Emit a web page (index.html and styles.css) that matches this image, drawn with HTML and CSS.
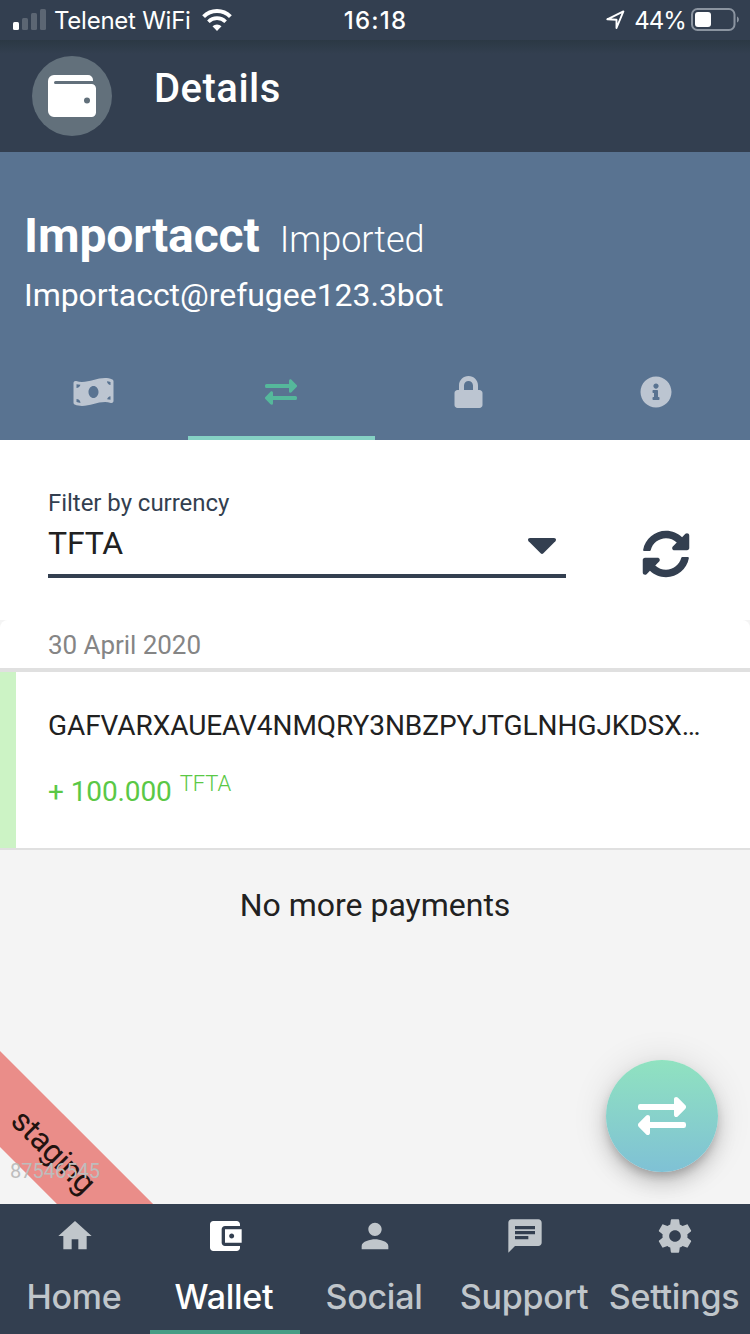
FILE: index.html
```html
<!DOCTYPE html>
<html lang="en">
<head>
<meta charset="utf-8">
<title>Wallet details</title>
<link rel="stylesheet" href="styles.css">
</head>
<body>
<svg class="defs" width="0" height="0">
  <symbol id="exchange" viewBox="0 0 32 32">
    <path d="M1.5 8H24V4.8c0-1.5 1.6-2 2.5-1.1l5.1 5.2c.6.6.6 1.6 0 2.2l-5.1 5.2c-.9.9-2.5.4-2.5-1.1V12H1.500A1.500 1.500 0 0 1 0 10.500v-1A1.500 1.500 0 0 1 1.500 8z"/>
    <path d="M30.500 24H8v3.200c0 1.500-1.600 2-2.500 1.100l-5.100-5.200c-.6-.6-.6-1.600 0-2.200l5.100-5.200c.9-.9 2.500-.4 2.500 1.100V20h22.500a1.500 1.500 0 0 1 1.500 1.500v1a1.500 1.500 0 0 1-1.500 1.500z"/>
  </symbol>
</svg>
<div class="screen">
  <div class="status">
    <div class="status-left">
      <svg class="signal" viewBox="0 0 34 22"><rect x="0" y="13" width="6" height="8" rx="1.500"/><g opacity=".2"><rect x="9" y="9" width="6" height="12" rx="1.500"/><rect x="18" y="4" width="6" height="17" rx="1.500"/><rect x="27" y="0" width="6" height="21" rx="1.500"/></g></svg>
      <span class="carrier">Telenet WiFi</span>
      <svg class="wifi" viewBox="0 0 30 22" fill="none" stroke="#fff"><path d="M1.600 7.600a19 19 0 0 1 26.800 0" stroke-width="4" fill="none"/><path d="M6.400 12.700a12.200 12.200 0 0 1 17.200 0" stroke-width="3.600" fill="none"/><path d="M15 22l-4.500-4.700a6.500 6.500 0 0 1 9 0z" fill="#fff" stroke="none"/></svg>
    </div>
    <span class="clock">16:18</span>
    <div class="status-right">
      <svg class="locate" viewBox="0 0 20 20"><path d="M1.300 9.300 17.400 1.400 10.500 18V9.800z" fill="none" stroke="#fff" stroke-width="1.900" stroke-linejoin="round"/></svg>
      <span class="percent">44%</span>
      <svg class="battery" viewBox="0 0 50 24"><rect x="1" y="1" width="42.500" height="21" rx="5.500" fill="none" stroke="#8b94a0" stroke-width="2"/><rect x="4" y="4" width="16" height="15" rx="3"/><path d="M46 8.500c2.500 1 2.500 5 0 6z" fill="#8b94a0"/></svg>
    </div>
  </div>

  <header class="header">
    <div class="avatar">
      <svg viewBox="0 0 48 42"><path fill-rule="evenodd" d="M6 0h34a5 5 0 0 1 5 5v1H7.500a1.500 1.500 0 0 0 0 3H43.500A4.500 4.500 0 0 1 48 13.500v24A4.500 4.500 0 0 1 43.500 42H6a6 6 0 0 1-6-6V6a6 6 0 0 1 6-6zM39 22.500a3 3 0 1 0 0 6 3 3 0 0 0 0-6z"/></svg>
    </div>
    <h1 class="title">Details</h1>
  </header>

  <section class="hero">
    <div class="account"><h2 class="name">Importacct</h2><span class="tag">Imported</span></div>
    <div class="address">Importacct@refugee123.3bot</div>
    <nav class="tabs">
      <div class="tab"><svg class="i-money" viewBox="0 0 640 512"><path d="M621.160 54.460C582.370 38.190 543.550 32 504.750 32c-123.170-.01-246.330 62.340-369.500 62.340-30.890 0-61.760-3.920-92.650-13.720-3.470-1.100-6.950-1.620-10.350-1.620C15.040 79 0 92.320 0 110.810v317.260c0 12.630 7.230 24.600 18.840 29.460C57.630 473.810 96.450 480 135.250 480c123.170 0 246.340-62.350 369.510-62.350 30.890 0 61.760 3.920 92.650 13.720 3.470 1.100 6.950 1.620 10.350 1.620 17.210 0 32.250-13.320 32.250-31.810V83.930c-.01-12.640-7.240-24.600-18.850-29.470zM48 132.220c20.120 5.040 41.120 7.570 62.720 8.930C104.840 170.540 79 192.690 48 192.690v-60.470zm0 285v-47.780c34.370 0 62.180 27.270 63.710 61.400-22.530-1.810-43.590-6.310-63.710-13.620zM320 352c-44.190 0-80-42.990-80-96 0-53.020 35.820-96 80-96s80 42.980 80 96c0 53.030-35.830 96-80 96zm272 27.780c-17.520-4.390-35.710-6.850-54.320-8.440 5.870-26.080 27.500-45.880 54.320-49.280v57.720zm0-236.110c-30.890-3.910-54.860-29.700-55.810-61.550 19.540 2.170 38.090 6.230 55.810 12.660v48.890z"/></svg></div>
      <div class="tab active"><svg class="i-32"><use href="#exchange"/></svg></div>
      <div class="tab"><svg class="i-lock" viewBox="0 0 448 512"><path d="M400 224h-24v-72C376 68.200 307.800 0 224 0S72 68.200 72 152v72H48c-26.500 0-48 21.500-48 48v192c0 26.500 21.500 48 48 48h352c26.500 0 48-21.500 48-48V272c0-26.500-21.500-48-48-48zm-104 0H152v-72c0-39.700 32.300-72 72-72s72 32.300 72 72v72z"/></svg></div>
      <div class="tab"><svg class="i-32" viewBox="0 0 512 512"><path d="M256 8C119.043 8 8 119.083 8 256c0 136.997 111.043 248 248 248s248-111.003 248-248C504 119.083 392.957 8 256 8zm0 110c23.196 0 42 18.804 42 42s-18.804 42-42 42-42-18.804-42-42 18.804-42 42-42zm56 254c0 6.627-5.373 12-12 12h-88c-6.627 0-12-5.373-12-12v-24c0-6.627 5.373-12 12-12h12v-64h-12c-6.627 0-12-5.373-12-12v-24c0-6.627 5.373-12 12-12h64c6.627 0 12 5.373 12 12v100h12c6.627 0 12 5.373 12 12v24z"/></svg></div>
    </nav>
  </section>

  <section class="filter">
    <div class="select">
      <label class="label">Filter by currency</label>
      <div class="value"><span>TFTA</span><svg class="caret" viewBox="0 0 28 16"><path d="M2 0h24c1.900 0 2.600 1.900 1.400 3.200L15.400 15.200a2 2 0 0 1-2.800 0L.6 3.200C-.6 1.900.1 0 2 0z"/></svg></div>
    </div>
    <svg class="sync" viewBox="0 0 512 512"><path d="M370.720 133.280C339.458 104.008 298.888 87.962 255.848 88c-77.458.068-144.328 53.178-162.791 126.850-1.344 5.363-6.122 9.150-11.651 9.150H24.103c-7.498 0-13.194-6.807-11.807-14.176C33.933 94.924 134.813 8 256 8c66.448 0 126.791 26.136 171.315 68.685L463.030 40.970C478.149 25.851 504 36.559 504 57.941V192c0 13.255-10.745 24-24 24H345.941c-21.382 0-32.090-25.851-16.971-40.971l41.750-41.749zM32 296h134.059c21.382 0 32.090 25.851 16.971 40.971l-41.750 41.750c31.262 29.273 71.835 45.319 114.876 45.280 77.418-.07 144.315-53.144 162.787-126.849 1.344-5.363 6.122-9.150 11.651-9.150h57.304c7.498 0 13.194 6.807 11.807 14.176C478.067 417.076 377.187 504 256 504c-66.448 0-126.791-26.136-171.315-68.685L48.970 471.030C33.851 486.149 8 475.441 8 454.059V320c0-13.255 10.745-24 24-24z"/></svg>
  </section>

  <main class="content">
    <div class="date">30 April 2020</div>
    <article class="payment">
      <div class="payee">GAFVARXAUEAV4NMQRY3NBZPYJTGLNHGJKDSX…</div>
      <div class="amount"><span>+ 100.000</span><span class="unit">TFTA</span></div>
    </article>
    <p class="end">No more payments</p>
    <div class="ribbon">staging</div>
    <span class="build">87546545</span>
    <button class="fab" aria-label="Transfer"><svg><use href="#exchange"/></svg></button>
  </main>

  <nav class="bottom">
    <div class="item"><svg viewBox="0 0 24 24"><path d="M10 20v-6h4v6h5v-8h3L12 3 2 12h3v8z"/></svg><span>Home</span></div>
    <div class="item current"><svg viewBox="0 0 24 24"><path d="M21 18v1c0 1.100-.9 2-2 2H5c-1.110 0-2-.9-2-2V5c0-1.100.89-2 2-2h14c1.100 0 2 .9 2 2v1h-9c-1.110 0-2 .9-2 2v8c0 1.100.89 2 2 2h9zm-9-2h10V8H12v8zm4-2.500c-.83 0-1.500-.67-1.500-1.500s.67-1.500 1.500-1.500 1.500.67 1.500 1.500-.67 1.500-1.500 1.500z"/></svg><span>Wallet</span></div>
    <div class="item"><svg viewBox="0 0 24 24"><path d="M12 12c2.210 0 4-1.790 4-4s-1.790-4-4-4-4 1.790-4 4 1.790 4 4 4zm0 2c-2.670 0-8 1.340-8 4v2h16v-2c0-2.660-5.330-4-8-4z"/></svg><span>Social</span></div>
    <div class="item"><svg viewBox="0 0 24 24"><path d="M20 2H4c-1.100 0-1.990.9-1.990 2L2 22l4-4h14c1.100 0 2-.9 2-2V4c0-1.100-.9-2-2-2zM6 9h12v2H6V9zm8 5H6v-2h8v2zm4-6H6V6h12v2z"/></svg><span>Support</span></div>
    <div class="item"><svg viewBox="0 0 24 24"><path d="M19.430 12.980c.04-.32.07-.64.07-.98s-.03-.66-.07-.98l2.110-1.650c.19-.15.24-.42.12-.64l-2-3.460c-.12-.22-.39-.3-.61-.22l-2.490 1c-.52-.4-1.080-.73-1.690-.98l-.38-2.650C14.460 2.180 14.250 2 14 2h-4c-.25 0-.46.18-.49.42l-.38 2.650c-.61.25-1.170.59-1.690.98l-2.490-1c-.23-.09-.49 0-.61.22l-2 3.460c-.13.22-.07.49.12.64l2.110 1.650c-.04.32-.07.65-.07.98s.03.66.07.98l-2.110 1.650c-.19.15-.24.42-.12.64l2 3.460c.12.22.39.3.61.22l2.490-1c.52.4 1.080.73 1.690.98l.38 2.650c.03.24.24.42.49.42h4c.25 0 .46-.18.49-.42l.38-2.650c.61-.25 1.170-.59 1.690-.98l2.490 1c.23.09.49 0 .61-.22l2-3.460c.12-.22.07-.49-.12-.64l-2.110-1.650zM12 15.500c-1.930 0-3.500-1.570-3.500-3.500s1.570-3.500 3.500-3.500 3.500 1.570 3.500 3.500-1.570 3.500-3.500 3.500z"/></svg><span>Settings</span></div>
  </nav>
</div>
</body>
</html>
```

FILE: styles.css
```css
* { box-sizing: border-box; }
body { margin: 0; font-family: Roboto, "Liberation Sans", sans-serif; color: #212121; }
h1, h2, p { margin: 0; }
svg { display: block; fill: currentColor; }
.defs { position: absolute; }
.screen { width: 750px; height: 1334px; display: flex; flex-direction: column; overflow: hidden; background: #f4f4f4; white-space: nowrap; }

.status { height: 40px; flex: none; display: grid; grid-template-columns: 1fr auto 1fr; align-items: center; padding: 0 12px 0 13px; background: #333f50; color: #fff; font-family: Inter, sans-serif; font-size: 24px; line-height: 40px; }
.status-left, .status-right { display: flex; align-items: center; }
.status-right { justify-content: flex-end; }
.carrier, .clock, .percent { padding-top: 2px; line-height: 38px; }
.signal { width: 34px; height: 22px; margin: 0 7px 0 0; }
.carrier { letter-spacing: -.25px; }
.wifi { width: 30px; height: 22px; margin-left: 11px; }
.clock { font-weight: 500; letter-spacing: 1.2px; }
.locate { width: 20px; height: 20px; margin-right: 8px; }
.percent { letter-spacing: -.9px; }
.battery { width: 50px; height: 24px; margin-left: 5px; margin-right: -3px; }

.header { height: 112px; flex: none; display: flex; align-items: center; padding-left: 32px; background: linear-gradient(#2b3844, #333f50 14px); color: #fff; }
.avatar { width: 80px; height: 80px; border-radius: 50%; background: #62707b; display: grid; place-items: center; }
.avatar svg { width: 48px; height: 42px; }
.title { margin: -14px 0 0 42px; font-size: 40px; font-weight: 500; line-height: 48px; letter-spacing: .5px; }

.hero { height: 288px; flex: none; display: flex; flex-direction: column; background: #597391; color: #fff; padding-top: 56px; }
.account { display: flex; align-items: baseline; gap: 20px; padding-left: 24px; height: 62px; line-height: 56px; }
.name { font-size: 48px; font-weight: 700; letter-spacing: -.1px; }
.tag { font-size: 36px; font-weight: 300; }
.address { padding-left: 24px; font-size: 32px; line-height: 50px; letter-spacing: -.04px; }
.tabs { display: grid; grid-template-columns: repeat(4, 1fr); height: 96px; margin-top: auto; }
.tab { display: grid; place-items: center; color: #bcc5d1; }
.tab.active { color: #55b89b; border-bottom: 4px solid #85d1c4; padding-top: 4px; }
.i-money { width: 41px; height: 32px; }
.i-32 { width: 32px; height: 32px; }
.i-lock { width: 29px; height: 32px; }

.filter { height: 180px; flex: none; display: flex; justify-content: space-between; background: #fff; padding: 48px 60px 0 48px; color: #333f50; }
.select { width: 518px; height: 90px; border-bottom: 4px solid #333f50; }
.label { display: block; font-size: 24px; line-height: 31px; letter-spacing: -.04px; }
.value { display: flex; align-items: center; justify-content: space-between; font-size: 32px; line-height: 48px; color: #212121; padding-right: 10px; letter-spacing: -.2px; }
.caret { width: 28px; height: 16px; color: #333f50; margin-top: 6px; }
.sync { width: 48px; height: 48px; margin-top: 42px; }

.content { flex: 1; min-height: 0; position: relative; overflow: hidden; }
.date { height: 52px; border-bottom: 4px solid #e0e0e0; border-radius: 8px 8px 0 0; padding-left: 48px; font-size: 26px; line-height: 50px; letter-spacing: -.05px; color: #858585; background: #fff; }
.payment { height: 178px; background: linear-gradient(90deg, #ccf3c5 16px, #fff 16px); border-bottom: 2px solid #e0e0e0; padding: 34px 32px 0 48px; }
.payee { font-size: 28px; line-height: 40px; letter-spacing: -.07px; }
.amount { display: flex; gap: 8px; margin-top: 26px; font-size: 28px; line-height: 40px; letter-spacing: -.1px; color: #5ac846; }
.unit { font-size: 22px; font-weight: 300; line-height: 24px; }
.end { text-align: center; font-size: 32px; line-height: 48px; margin-top: 31px; }

/* Corner marker laid diagonally across the lower left of the list */
.ribbon { position: absolute; left: -98px; bottom: 19px; width: 300px; height: 68px; background: #ea8d89; transform: rotate(45deg); text-align: center; font-size: 32px; line-height: 67px; letter-spacing: -.3px; padding-left: 3px; color: #21120f; }
.build { position: absolute; left: 10px; bottom: 21px; font-size: 20px; line-height: 24px; color: #bdbdbd; }
.fab { position: absolute; right: 32px; bottom: 32px; width: 112px; height: 112px; padding: 0; border: 0; border-radius: 50%; background: linear-gradient(#90e2c0, #7fc1d5); color: #fff; display: grid; place-items: center; box-shadow: 0 6px 10px -2px rgba(0,0,0,.2), 0 12px 20px rgba(0,0,0,.14), 0 2px 36px rgba(0,0,0,.12); }
.fab svg { width: 48px; height: 48px; }

.bottom { height: 130px; flex: none; display: grid; grid-template-columns: repeat(5, 150px); background: #333f50; color: #c0c6cb; font-family: Inter, sans-serif; font-size: 34px; font-weight: 500; }
.item { display: flex; flex-direction: column; align-items: center; padding-top: 12px; border-bottom: 4px solid transparent; }
.item svg { width: 40px; height: 40px; }
.item span { line-height: 44px; margin: 19px 2px 0 0; letter-spacing: -.25px; }
.item.current { color: #fff; border-bottom-color: #479d85; }
```
